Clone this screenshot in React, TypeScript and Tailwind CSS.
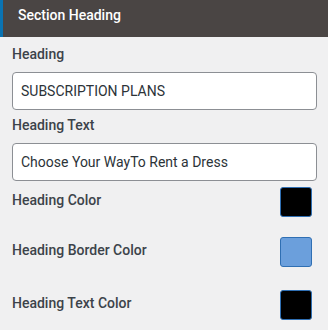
import React from "react";

const font = { fontFamily: "Roboto, 'Liberation Sans', sans-serif" };

function ColorRow({ label, color, className }: { label: string; color: string; className: string }) {
  return (
    <div className={`flex items-center justify-between pr-[4px] ${className}`}>
      <span className="text-[14px] font-medium text-[#3c434a] leading-[20px] -mt-[4px]">{label}</span>
      <div className="w-[32px] h-[30px] rounded-[3px] border border-[#2f6fb3]" style={{ background: color }} />
    </div>
  );
}

export default function App() {
  return (
    <div className="w-[328px] h-[330px] bg-[#f0f0f1] overflow-hidden" style={font}>
      <div className="h-[37px] bg-[#4a4544] border-l-[3px] border-[#0a73b2] pl-[15px] pt-[3px]">
        <span className="text-white text-[14px] font-medium leading-[20px]">Section Heading</span>
      </div>
      <div className="px-[12px]">
        <div className="mt-[7px] text-[14px] font-medium text-[#3c434a] leading-[20px]">Heading</div>
        <div className="mt-[8px] w-[305px] h-[38px] bg-white border border-[#8c8f94] rounded-[4px] flex items-center px-[8px] text-[14px] text-[#2c3338]">
          SUBSCRIPTION PLANS
        </div>
        <div className="mt-[5px] text-[14px] font-medium text-[#3c434a] leading-[20px]">Heading Text</div>
        <div className="mt-[8px] w-[305px] h-[38px] bg-white border border-[#8c8f94] rounded-[4px] flex items-center px-[8px] text-[14px] text-[#2c3338]">
          Choose Your WayTo Rent a Dress
        </div>
        <ColorRow label="Heading Color" color="#000000" className="mt-[6px]" />
        <ColorRow label="Heading Border Color" color="#6b9fdc" className="mt-[20px]" />
        <ColorRow label="Heading Text Color" color="#000000" className="mt-[23px]" />
      </div>
    </div>
  );
}
